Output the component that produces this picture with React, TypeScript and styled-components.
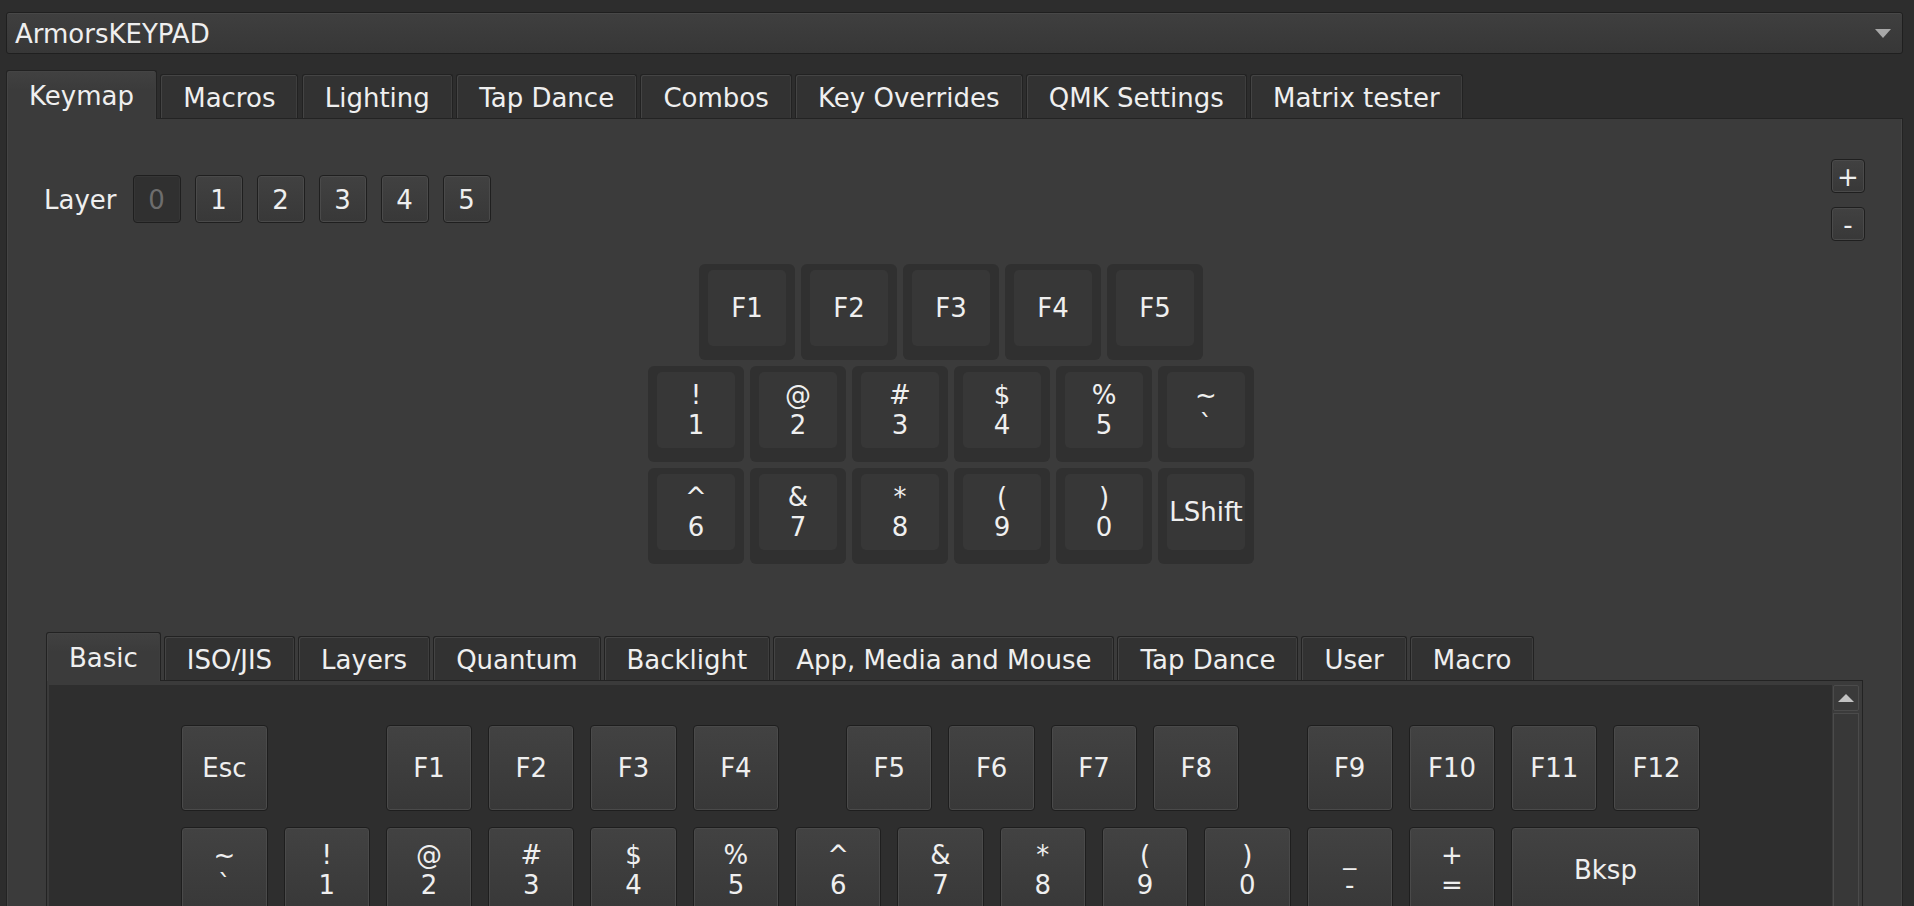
import styled, { createGlobalStyle } from "styled-components";

const UNIT = 102.3;
const CAP = 102;

const GlobalStyle = createGlobalStyle`
  html, body {
    margin: 0;
    padding: 0;
    background: #2d2d2d;
  }
  body {
    font-family: "DejaVu Sans", "Liberation Sans", sans-serif;
  }
`;

const Window = styled.div`
  width: 1914px;
  height: 906px;
  overflow: hidden;
  box-sizing: border-box;
  padding: 12px 11px 0 6px;
  background: #2d2d2d;
  color: #efefef;
  font-family: "DejaVu Sans", "Liberation Sans", sans-serif;
  font-size: 26px;
  display: flex;
  flex-direction: column;
`;

const Combo = styled.div`
  height: 42px;
  flex-shrink: 0;
  box-sizing: border-box;
  border: 1px solid #1f1f1f;
  border-radius: 3px;
  background: linear-gradient(#3f3f3f, #373737);
  box-shadow: inset 0 1px 0 #484848;
  display: flex;
  align-items: center;
  justify-content: space-between;
  padding: 1px 11px 0 8px;
`;

const ComboArrow = styled.span`
  width: 0;
  height: 0;
  border-left: 8px solid transparent;
  border-right: 8px solid transparent;
  border-top: 9px solid #a8a8a8;
`;

const TabBar = styled.div<{ $gap: number }>`
  display: flex;
  align-items: flex-end;
  gap: ${(p) => p.$gap}px;
  height: 48px;
  flex-shrink: 0;
  position: relative;
  z-index: 1;
`;

const Tab = styled.div<{ $active?: boolean }>`
  box-sizing: border-box;
  height: ${(p) => (p.$active ? 49 : 44)}px;
  margin-bottom: ${(p) => (p.$active ? -1 : 0)}px;
  padding: 2px 22px 0 22px;
  display: flex;
  align-items: center;
  white-space: nowrap;
  border: 1px solid #222222;
  border-bottom: none;
  border-radius: 3px 3px 0 0;
  background: ${(p) =>
    p.$active ? "linear-gradient(#414141, #3b3b3b 40%)" : "#323232"};
  box-shadow: inset 1px 1px 0 #444444, inset -1px 0 0 #3e3e3e;
`;

const TopTabs = styled(TabBar)`
  margin-top: 16px;
`;

const Pane = styled.div`
  flex: 1;
  min-height: 0;
  box-sizing: border-box;
  border: 1px solid #232323;
  border-bottom: none;
  background: #3b3b3b;
  box-shadow: inset 1px 0 0 #444444, inset -1px 0 0 #444444;
  display: flex;
  flex-direction: column;
`;

const TopRow = styled.div`
  display: flex;
  justify-content: space-between;
  align-items: flex-start;
  padding: 40px 37px 0 37px;
`;

const LayerGroup = styled.div`
  display: flex;
  align-items: center;
  gap: 14px;
  margin-top: 16px;
`;

const LayerLabel = styled.span`
  margin-right: 2px;
  padding-top: 2px;
`;

const PushButton = styled.div<{ $size: number; $active?: boolean }>`
  width: ${(p) => p.$size}px;
  height: ${(p) => p.$size}px;
  box-sizing: border-box;
  display: flex;
  align-items: center;
  justify-content: center;
  padding-top: 1px;
  border: 1px solid #1f1f1f;
  border-radius: 4px;
  background: ${(p) =>
    p.$active ? "#303030" : "linear-gradient(#414141, #383838)"};
  box-shadow: inset 0 0 0 1px ${(p) => (p.$active ? "#363636" : "#4a4a4a")};
  color: ${(p) => (p.$active ? "#6d6d6d" : "#efefef")};
`;

const ZoomColumn = styled.div`
  display: flex;
  flex-direction: column;
  gap: 14px;
`;

const Board = styled.div`
  align-self: center;
  margin-top: 23px;
  margin-right: 7px;
  display: flex;
  flex-direction: column;
  gap: 6px;
`;

const KeyRow = styled.div<{ $gap: number }>`
  display: flex;
  gap: ${(p) => p.$gap}px;
`;

const Gap = styled.div<{ $w: number }>`
  width: ${(p) => p.$w}px;
  flex-shrink: 0;
`;

const KeyCap = styled.div`
  width: 96px;
  height: 96px;
  box-sizing: border-box;
  padding: 6px 9px 14px 9px;
  background: #303030;
  border-radius: 6px;
  display: flex;
`;

const KeyFace = styled.div`
  flex: 1;
  background: #373737;
  border-radius: 5px;
  display: flex;
  flex-direction: column;
  align-items: center;
  justify-content: center;
  line-height: 30px;
  white-space: nowrap;
`;

const SubSection = styled.div`
  flex: 1;
  min-height: 0;
  margin: 68px 39px 0 39px;
  display: flex;
  flex-direction: column;
`;

const SubPane = styled.div`
  flex: 1;
  min-height: 0;
  box-sizing: border-box;
  border: 1px solid #232323;
  border-bottom: none;
  background: #3b3b3b;
  padding: 4px 3px 0 2px;
  display: flex;
  gap: 1px;
`;

const ScrollView = styled.div`
  flex: 1;
  background: #2e2e2e;
  display: flex;
  justify-content: center;
  padding-top: 40px;
`;

const BasicBoard = styled.div`
  display: flex;
  flex-direction: column;
  gap: 16px;
`;

const BasicKey = styled.div<{ $u: number }>`
  width: ${(p) => p.$u * UNIT - 16}px;
  height: 86px;
  box-sizing: border-box;
  border: 1px solid #1e1e1e;
  border-radius: 4px;
  background: linear-gradient(#424242, #383838);
  box-shadow: inset 0 0 0 1px #4a4a4a;
  display: flex;
  flex-direction: column;
  align-items: center;
  justify-content: center;
  line-height: 30px;
  flex-shrink: 0;
`;

const ScrollBar = styled.div`
  width: 26px;
  display: flex;
  flex-direction: column;
  gap: 2px;
`;

const ScrollUp = styled.div`
  height: 26px;
  box-sizing: border-box;
  border: 1px solid #4b4b4b;
  border-radius: 2px;
  background: #3a3a3a;
  display: flex;
  align-items: center;
  justify-content: center;
  &::after {
    content: "";
    border-left: 8px solid transparent;
    border-right: 8px solid transparent;
    border-bottom: 8px solid #c2c2c2;
  }
`;

const ScrollTrack = styled.div`
  flex: 1;
  box-sizing: border-box;
  border: 1px solid #4b4b4b;
  border-bottom: none;
  background: #383838;
`;

function Label({ text }: { text: string }) {
  const lines = text.split("\n");
  return (
    <>
      {lines.map((l, i) => (
        <span key={i}>{l}</span>
      ))}
    </>
  );
}

const mainTabs = [
  "Keymap",
  "Macros",
  "Lighting",
  "Tap Dance",
  "Combos",
  "Key Overrides",
  "QMK Settings",
  "Matrix tester",
];

const subTabs = [
  "Basic",
  "ISO/JIS",
  "Layers",
  "Quantum",
  "Backlight",
  "App, Media and Mouse",
  "Tap Dance",
  "User",
  "Macro",
];

const padRows = [
  ["F1", "F2", "F3", "F4", "F5"],
  ["!\n1", "@\n2", "#\n3", "$\n4", "%\n5", "~\n`"],
  ["^\n6", "&\n7", "*\n8", "(\n9", ")\n0", "LShift"],
];

// null = blank space, u = width in key units
type Slot = { t: string | null; u: number };

const basicRows: Slot[][] = [
  [
    { t: "Esc", u: 1 },
    { t: null, u: 1 },
    { t: "F1", u: 1 },
    { t: "F2", u: 1 },
    { t: "F3", u: 1 },
    { t: "F4", u: 1 },
    { t: null, u: 0.5 },
    { t: "F5", u: 1 },
    { t: "F6", u: 1 },
    { t: "F7", u: 1 },
    { t: "F8", u: 1 },
    { t: null, u: 0.5 },
    { t: "F9", u: 1 },
    { t: "F10", u: 1 },
    { t: "F11", u: 1 },
    { t: "F12", u: 1 },
  ],
  [
    { t: "~\n`", u: 1 },
    { t: "!\n1", u: 1 },
    { t: "@\n2", u: 1 },
    { t: "#\n3", u: 1 },
    { t: "$\n4", u: 1 },
    { t: "%\n5", u: 1 },
    { t: "^\n6", u: 1 },
    { t: "&\n7", u: 1 },
    { t: "*\n8", u: 1 },
    { t: "(\n9", u: 1 },
    { t: ")\n0", u: 1 },
    { t: "_\n-", u: 1 },
    { t: "+\n=", u: 1 },
    { t: "Bksp", u: 2 },
  ],
];

export default function App() {
  return (
    <Window>
      <GlobalStyle />
      <Combo>
        <span>ArmorsKEYPAD</span>
        <ComboArrow />
      </Combo>

      <TopTabs $gap={3.3}>
        {mainTabs.map((t, i) => (
          <Tab key={t} $active={i === 0}>
            {t}
          </Tab>
        ))}
      </TopTabs>

      <Pane>
        <TopRow>
          <LayerGroup>
            <LayerLabel>Layer</LayerLabel>
            {[0, 1, 2, 3, 4, 5].map((n) => (
              <PushButton key={n} $size={48} $active={n === 0}>
                {n}
              </PushButton>
            ))}
          </LayerGroup>
          <ZoomColumn>
            <PushButton $size={34}>+</PushButton>
            <PushButton $size={34}>-</PushButton>
          </ZoomColumn>
        </TopRow>

        <Board>
          {padRows.map((row, r) => (
            <KeyRow key={r} $gap={6}>
              {r === 0 && <Gap $w={CAP / 2 - 6} />}
              {row.map((k) => (
                <KeyCap key={k}>
                  <KeyFace>
                    <Label text={k} />
                  </KeyFace>
                </KeyCap>
              ))}
            </KeyRow>
          ))}
        </Board>

        <SubSection>
          <TabBar $gap={3}>
            {subTabs.map((t, i) => (
              <Tab key={t} $active={i === 0}>
                {t}
              </Tab>
            ))}
          </TabBar>
          <SubPane>
            <ScrollView>
              <BasicBoard>
                {basicRows.map((row, r) => (
                  <KeyRow key={r} $gap={16}>
                    {row.map((s, i) =>
                      s.t === null ? (
                        <Gap key={i} $w={s.u * UNIT - 16} />
                      ) : (
                        <BasicKey key={i} $u={s.u}>
                          <Label text={s.t} />
                        </BasicKey>
                      )
                    )}
                  </KeyRow>
                ))}
              </BasicBoard>
            </ScrollView>
            <ScrollBar>
              <ScrollUp />
              <ScrollTrack />
            </ScrollBar>
          </SubPane>
        </SubSection>
      </Pane>
    </Window>
  );
}
